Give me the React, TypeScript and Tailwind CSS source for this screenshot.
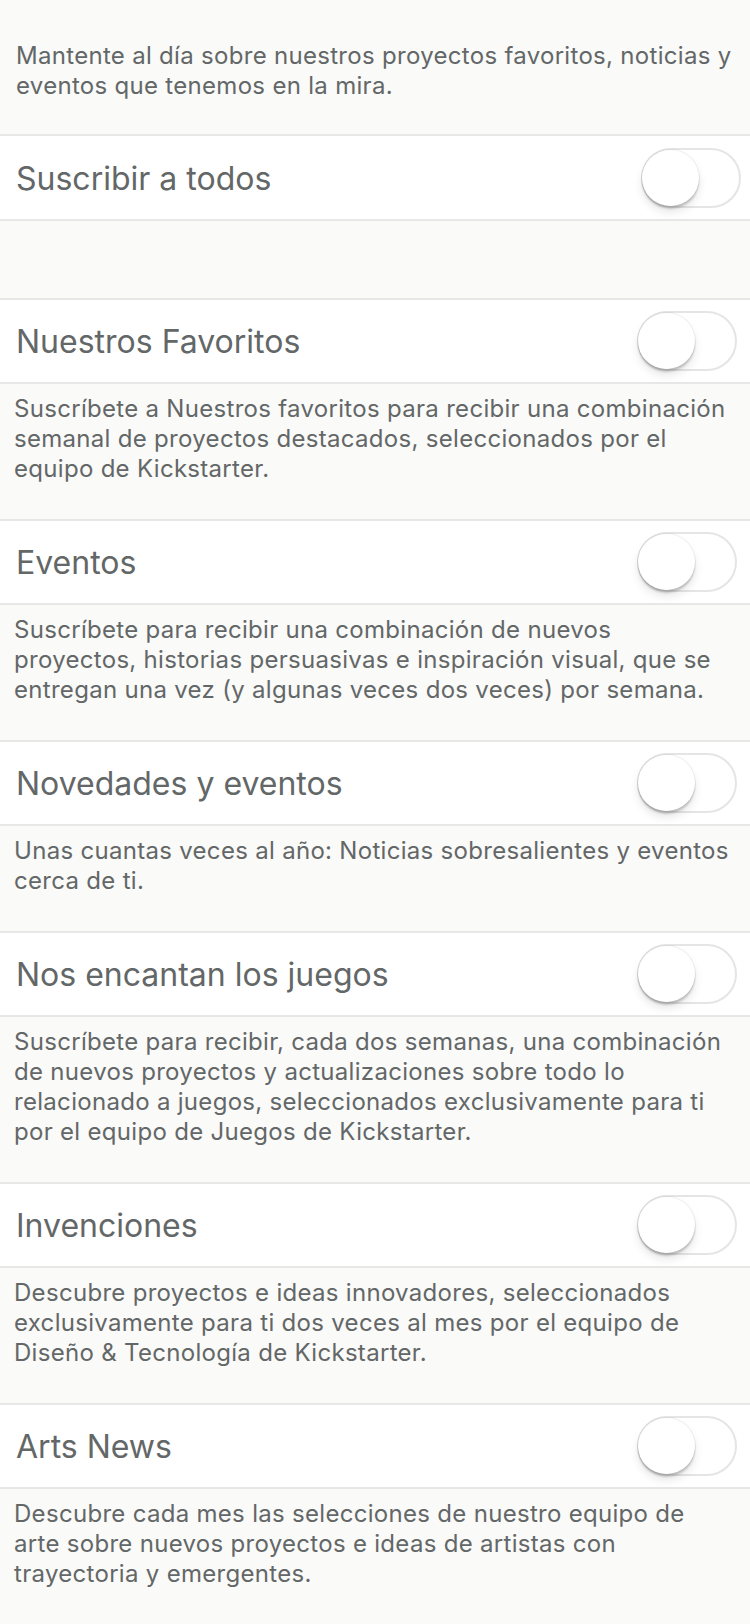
import React from 'react'

type Item = {
  title: string
  desc: string
}

const items: Item[] = [
  {
    title: 'Nuestros Favoritos',
    desc: 'Suscríbete a Nuestros favoritos para recibir una combinación semanal de proyectos destacados, seleccionados por el equipo de Kickstarter.',
  },
  {
    title: 'Eventos',
    desc: 'Suscríbete para recibir una combinación de nuevos proyectos, historias persuasivas e inspiración visual, que se entregan una vez (y algunas veces dos veces) por semana.',
  },
  {
    title: 'Novedades y eventos',
    desc: 'Unas cuantas veces al año: Noticias sobresalientes y eventos cerca de ti.',
  },
  {
    title: 'Nos encantan los juegos',
    desc: 'Suscríbete para recibir, cada dos semanas, una combinación de nuevos proyectos y actualizaciones sobre todo lo relacionado a juegos, seleccionados exclusivamente para ti por el equipo de Juegos de Kickstarter.',
  },
  {
    title: 'Invenciones',
    desc: 'Descubre proyectos e ideas innovadores, seleccionados exclusivamente para ti dos veces al mes por el equipo de Diseño & Tecnología de Kickstarter.',
  },
  {
    title: 'Arts News',
    desc: 'Descubre cada mes las selecciones de nuestro equipo de arte sobre nuevos proyectos e ideas de artistas con trayectoria y emergentes.',
  },
]

function Toggle({ shift }: { shift?: boolean }) {
  return (
    <div
      className={`relative h-[60px] w-[100px] shrink-0 rounded-full border-2 border-[#e5e5e5] bg-white ${
        shift ? 'mr-[9px]' : 'mr-[13px]'
      }`}
    >
      {/* knob */}
      <div className="absolute left-[-1px] top-0 h-[56px] w-[57px] rounded-full bg-white shadow-[0_3px_2px_rgba(0,0,0,0.16),0_6px_10px_rgba(0,0,0,0.1),0_0_0_1px_rgba(0,0,0,0.05)]" />
    </div>
  )
}

function Row({ title, shift }: { title: string; shift?: boolean }) {
  return (
    <div
      className={`flex items-center justify-between border-y-2 border-[#e7e7e6] bg-white pl-4 ${
        shift ? 'h-[87px]' : 'h-[86px]'
      }`}
    >
      <span className="pt-[2px] text-[32px] leading-none">{title}</span>
      <Toggle shift={shift} />
    </div>
  )
}

export default function App() {
  return (
    <div className="min-h-[1624px] bg-[#fafaf9] font-['Inter',sans-serif] text-[#636767]">
      {/* Intro */}
      <p className="pl-4 pr-3 pt-[41px] pb-[33px] text-[24px] leading-[30px] tracking-[0.3px]">
        Mantente al día sobre nuestros proyectos favoritos, noticias y eventos que tenemos en la mira.
      </p>

      <Row title="Suscribir a todos" shift />

      <div className="h-[77px]" />

      {items.map((it) => (
        <div key={it.title}>
          <Row title={it.title} />
          <p className="pl-[14px] pr-4 pt-[10px] pb-[35px] text-[24px] leading-[30px] tracking-[0.3px]">
            {it.desc}
          </p>
        </div>
      ))}
    </div>
  )
}
